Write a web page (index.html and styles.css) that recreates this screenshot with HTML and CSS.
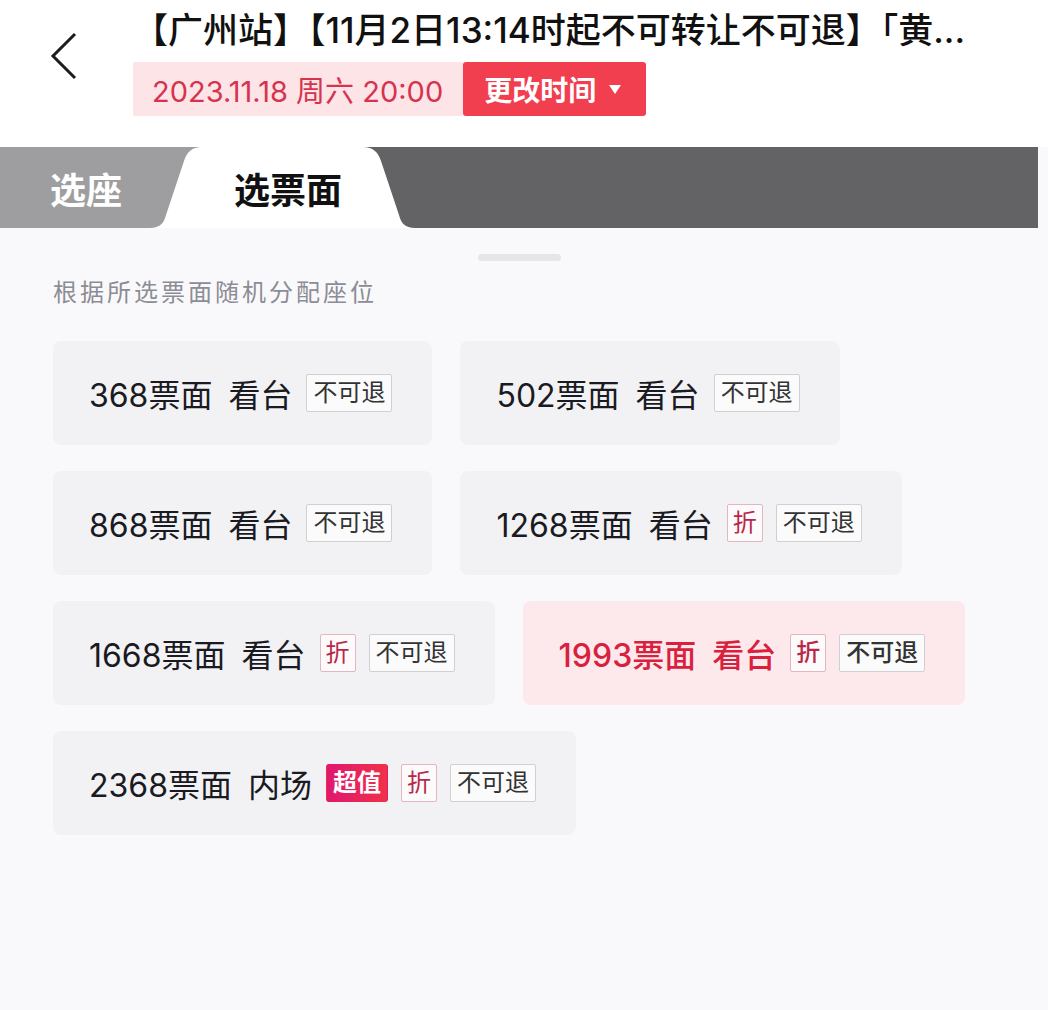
FILE: index.html
```html
<!DOCTYPE html>
<html lang="zh-CN">
<head>
    <meta charset="UTF-8">
    <meta name="viewport" content="width=device-width, initial-scale=1.0">
    <title>选票面</title>
    <link rel="stylesheet" href="styles.css">
</head>
<body>
    <div class="header">
        <div class="back">
            <svg width="30" height="50" viewBox="0 0 30 50">
                <polyline points="25,3 3,25 25,47" fill="none" stroke="#1c1c1e" stroke-width="3" stroke-linejoin="miter"/>
            </svg>
        </div>
        <div class="info">
            <div class="title">【广州站】【11月2日13:14时起不可转让不可退】「黄...</div>
            <div class="date-row">
                <div class="date">2023.11.18 周六 20:00</div>
                <button class="change">更改时间 <span class="caret"></span></button>
            </div>
        </div>
    </div>

    <div class="tabs">
        <div class="tab-seat">选座</div>
        <div class="tab-face">
            <svg class="tab-shape" width="265" height="81" viewBox="0 0 265 81">
                <path d="M0,81 C10,81 14,76 16,68 L34,14 C37,5 42,0 52,0 L213,0 C223,0 228,5 231,14 L249,68 C251,76 255,81 265,81 Z" fill="#ffffff"/>
            </svg>
            <span>选票面</span>
        </div>
        <div class="tab-rest"></div>
    </div>

    <div class="content">
        <div class="grabber"></div>
        <p class="hint">根据所选票面随机分配座位</p>
        <div class="ticket-list">
            <div class="ticket">
                <span class="price">368票面</span><span class="area">看台</span>
                <span class="tag">不可退</span>
            </div>
            <div class="ticket">
                <span class="price">502票面</span><span class="area">看台</span>
                <span class="tag">不可退</span>
            </div>
            <div class="ticket">
                <span class="price">868票面</span><span class="area">看台</span>
                <span class="tag">不可退</span>
            </div>
            <div class="ticket">
                <span class="price">1268票面</span><span class="area">看台</span>
                <span class="tag tag-discount">折</span>
                <span class="tag">不可退</span>
            </div>
            <div class="ticket">
                <span class="price">1668票面</span><span class="area">看台</span>
                <span class="tag tag-discount">折</span>
                <span class="tag">不可退</span>
            </div>
            <div class="ticket selected">
                <span class="price">1993票面</span><span class="area">看台</span>
                <span class="tag tag-discount">折</span>
                <span class="tag">不可退</span>
            </div>
            <div class="ticket">
                <span class="price">2368票面</span><span class="area">内场</span>
                <span class="tag tag-hot">超值</span>
                <span class="tag tag-discount">折</span>
                <span class="tag">不可退</span>
            </div>
        </div>
    </div>
</body>
</html>
```

FILE: styles.css
```css
body {
    margin: 0;
    font-family: 'Inter', 'Noto Sans CJK SC', sans-serif;
    background-color: #f9f9fb;
    color: #1a1a22;
}
.header {
    display: flex;
    background-color: #ffffff;
    padding-top: 10px;
    padding-bottom: 31px;
}
.back {
    width: 133px;
    display: flex;
    align-items: center;
    padding-left: 50px;
    box-sizing: border-box;
    margin-top: -14px;
}
.info {
    flex: 1;
    min-width: 0;
}
.title {
    font-size: 35px;
    line-height: 40px;
    font-weight: 500;
    color: #111;
    white-space: nowrap;
}
.date-row {
    display: flex;
    margin-top: 12px;
    height: 54px;
}
.date {
    display: flex;
    align-items: center;
    background-color: #fde4e7;
    color: #d6334f;
    font-size: 29px;
    padding: 0 20px 0 19px;
    border-radius: 2px 0 0 2px;
}
.change {
    display: flex;
    align-items: center;
    gap: 13px;
    border: none;
    background-color: #f13f4f;
    color: #ffffff;
    font-family: inherit;
    font-size: 28px;
    font-weight: bold;
    padding: 0 25px 0 21px;
    border-radius: 3px;
}
.caret {
    width: 0;
    height: 0;
    border-left: 6px solid transparent;
    border-right: 6px solid transparent;
    border-top: 9px solid #ffffff;
}
.tabs {
    display: flex;
    width: 1038px;
    height: 81px;
    background: linear-gradient(to right, #9e9ea0 0 280px, #636365 280px);
}
.tab-seat {
    width: 150px;
    padding-left: 50px;
    box-sizing: border-box;
    display: flex;
    align-items: center;
    color: #ffffff;
    font-size: 36px;
    font-weight: bold;
}
.tab-face {
    position: relative;
    width: 265px;
    display: flex;
    align-items: center;
    justify-content: center;
    padding-left: 11px;
    box-sizing: border-box;
    font-size: 36px;
    font-weight: bold;
    color: #111;
}
.tab-shape {
    position: absolute;
    left: 0;
    top: 0;
}
.tab-face span {
    position: relative;
}
.tab-rest {
    flex: 1;
}
.content {
    width: 1038px;
    padding-top: 26px;
}
.grabber {
    width: 83px;
    height: 7px;
    border-radius: 4px;
    background-color: #e6e6ea;
    margin: 0 auto;
}
.hint {
    margin: 17px 0 0 53px;
    font-size: 24px;
    line-height: 30px;
    letter-spacing: 3px;
    color: #8c8c94;
}
.ticket-list {
    display: flex;
    flex-wrap: wrap;
    gap: 26px 28px;
    margin: 33px 0 0 53px;
    width: 985px;
}
.ticket {
    display: flex;
    align-items: center;
    height: 104px;
    padding: 0 40px 0 36px;
    background-color: #f2f2f4;
    border-radius: 8px;
    font-size: 32px;
}
.price {
    margin-right: 16px;
}
.area {
    margin-right: 14px;
}
.tag {
    height: 38px;
    line-height: 36px;
    box-sizing: border-box;
    padding: 0 6px;
    margin-right: 13px;
    font-size: 24px;
    color: #333;
    background-color: #fbfbfc;
    border: 1px solid #cfcfd4;
    border-radius: 2px;
}
.tag:last-child {
    margin-right: 0;
}
.tag-discount {
    padding: 0 5px;
    color: #b8284a;
    border-color: #e4b6c0;
    background-color: #fdfafb;
}
.tag-hot {
    font-weight: bold;
    color: #ffffff;
    border-color: transparent;
    background: linear-gradient(to right, #e0186e, #f0304a);
    border-radius: 3px;
}
.selected {
    background-color: #fde9eb;
    color: #d8213f;
    font-weight: 500;
}
```
